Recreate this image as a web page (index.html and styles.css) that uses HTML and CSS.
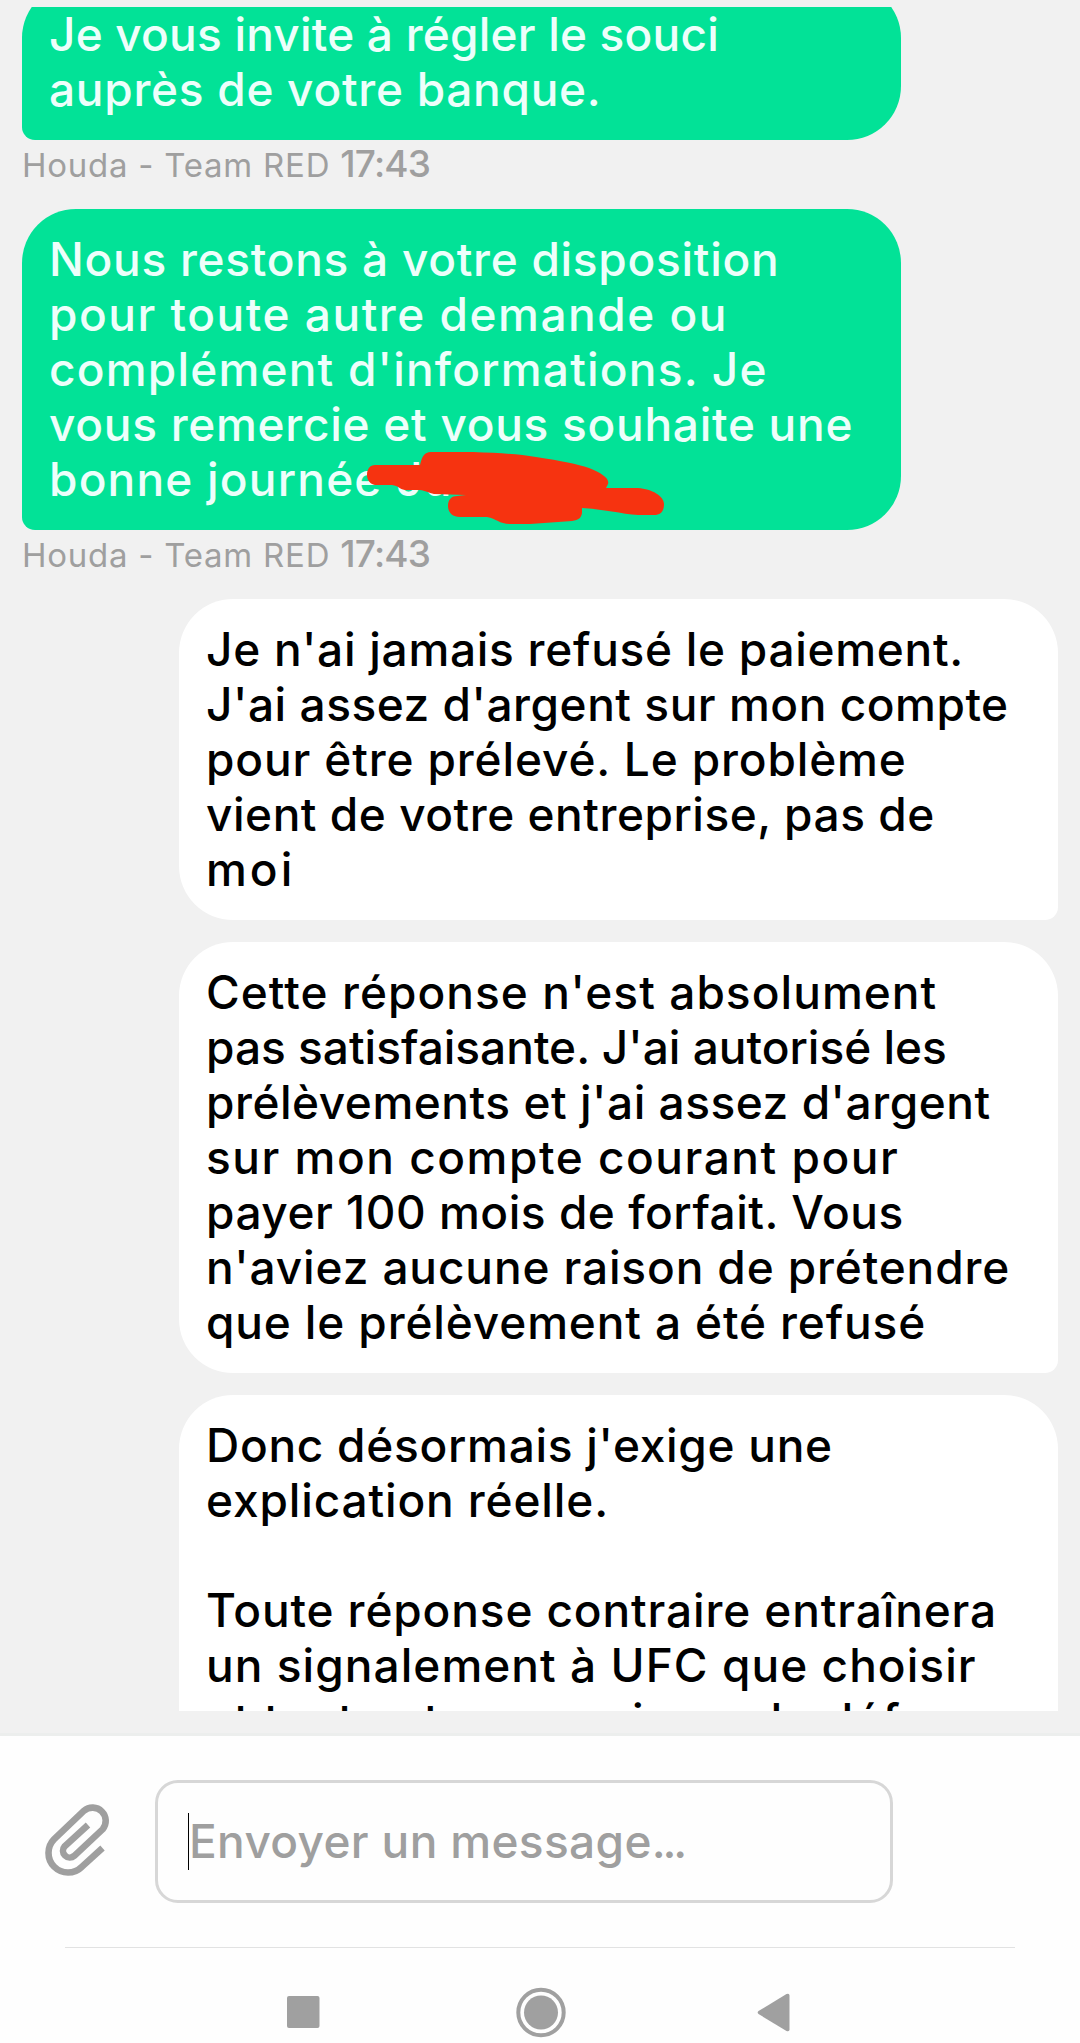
FILE: index.html
```html
<!DOCTYPE html>
<html lang="fr">
<head>
  <meta charset="UTF-8" />
  <title>Discussion - Team RED</title>
  <meta name="viewport" content="width=device-width, initial-scale=1" />
  <link rel="stylesheet" href="styles.css">
</head>
<body>

  <main class="chat">
    <div class="messages">
      <div class="bubble agent">
        <span class="ls-1">Je vous invite à régler le souci</span>
        <span class="ls-3">auprès de votre banque.</span>
      </div>
      <p class="meta">Houda - Team RED <time>17:43</time></p>

      <div class="bubble agent">
        <span class="ls-3">Nous restons à votre disposition</span>
        <span class="ls-7">pour toute autre demande ou</span>
        <span class="ls-6">complément d'informations. Je</span>
        <span class="ls-3">vous remercie et vous souhaite une</span>
        <span class="ls-6">bonne journée Ju</span>
        <svg class="scribble" viewBox="367 452 298 73">
          <path d="M375 465H420C422 457 424 452 431 452H473C500 453 518 454 536 457C562 461 577 464 589 468C602 473 610 479 608 484L606 488H638C652 489 664 496 664 504C664 511 661 515 654 515H638C622 514 603 509 582 508V513C581 518 579 520 572 521L530 524H511C499 524 497 519 487 517H460C452 517 448 512 448 506C448 499 452 496 457 496L466 495L434 494C426 492 424 490 418 490H405C399 489 399 486 392 485H375C370 484 367 480 367 475C367 469 370 465 375 465Z"/>
        </svg>
      </div>
      <p class="meta">Houda - Team RED <time>17:43</time></p>

      <div class="bubble client">
        <span class="ls-3">Je n'ai jamais refusé le paiement.</span>
        <span class="ls-2">J'ai assez d'argent sur mon compte</span>
        <span class="ls-4">pour être prélevé. Le problème</span>
        <span class="ls-2">vient de votre entreprise, pas de</span>
        <span class="ls-8">moi</span>
      </div>

      <div class="bubble client">
        <span class="ls-5">Cette réponse n'est absolument</span>
        <span>pas satisfaisante. J'ai autorisé les</span>
        <span class="ls-2">prélèvements et j'ai assez d'argent</span>
        <span class="ls-7">sur mon compte courant pour</span>
        <span class="ls-2">payer 100 mois de forfait. Vous</span>
        <span class="ls-4">n'aviez aucune raison de prétendre</span>
        <span class="ls-4">que le prélèvement a été refusé</span>
      </div>

      <div class="bubble client">
        <span class="ls-3">Donc désormais j'exige une</span>
        <span class="ls-4">explication réelle.</span>
        <br>
        <span class="ls-4">Toute réponse contraire entraînera</span>
        <span class="ls-5">un signalement à UFC que choisir</span>
        <span class="ls-5">et tout autre organisme de défense</span>
      </div>
    </div>
  </main>

  <footer>
    <div class="composer">
      <svg class="clip" viewBox="44 1803 68 73">
        <path d="M102.5 1848L81.8 1866.8A19.5 19.5 0 0 1 54.2 1839.2L84 1810.7A13.2 13.2 0 0 1 102.6 1829.3L74.3 1855.8A6.8 6.8 0 0 1 64.7 1846.2L88 1825"/>
      </svg>
      <div class="field"><span class="caret"></span>Envoyer un message<span class="dots">...</span></div>
    </div>
    <div class="navbar">
      <svg viewBox="0 0 60 60"><rect x="14" y="14" width="32.500" height="32" rx="2"/></svg>
      <svg viewBox="0 0 60 60"><circle class="ring" cx="32" cy="30.500" r="22.700"/><circle cx="32" cy="30.500" r="17"/></svg>
      <svg viewBox="0 0 60 60"><path d="M14.500 29Q12.800 30.500 14.500 32L42.500 49Q45.500 50 45.500 47.500V13.500Q45.500 11 42.500 12Z"/></svg>
    </div>
  </footer>

</body>
</html>
```
FILE: styles.css
```css
* {
  box-sizing: border-box;
}
body {
  margin: 0;
  height: 2043px;
  overflow: hidden;
  background: #fefefe;
  font-family: Inter, "Noto Sans", sans-serif;
  font-weight: 500;
  font-size: 46px;
  line-height: 55px;
}
.chat {
  height: 1736px;
  padding: 7px 22px 22px;
  background: #f1f1f1;
  border-bottom: 3px solid #eceeed;
}
.messages {
  height: 1704px;
  overflow: hidden;
  display: flex;
  flex-direction: column;
}
/* the list is scrolled down a little */
.messages::before {
  content: "";
  flex: none;
  margin-top: -23px;
}
.bubble {
  position: relative;
  flex: none;
  width: 879px;
  padding: 23px 27px;
  white-space: nowrap;
}
.bubble span {
  display: block;
}
.agent {
  background: #02e297;
  color: #edfffb;
  border-radius: 54px 54px 54px 13px;
}
.client {
  align-self: flex-end;
  margin-bottom: 22px;
  background: #fff;
  color: #000;
  border-radius: 54px 54px 13px 54px;
}
.ls-1 { letter-spacing: 0.2px; }
.ls-2 { letter-spacing: 0.53px; }
.ls-3 { letter-spacing: 0.72px; }
.ls-4 { letter-spacing: 0.87px; }
.ls-5 { letter-spacing: 1.05px; }
.ls-6 { letter-spacing: 1.2px; }
.ls-7 { letter-spacing: 1.52px; }
.ls-8 { letter-spacing: 3px; }
.meta {
  flex: none;
  height: 69px;
  margin: 0;
  padding-left: 0;
  font-size: 33px;
  font-weight: 400;
  line-height: 48px;
  letter-spacing: 0.75px;
  color: #9f9f9f;
}
.meta time {
  font-size: 37px;
  font-weight: 500;
  letter-spacing: -0.8px;
}
.scribble {
  position: absolute;
  left: 345px;
  top: 243px;
  width: 298px;
  height: 73px;
  fill: #f63310;
}
.composer {
  display: flex;
  align-items: center;
  height: 212px;
  margin: 0 65px;
  border-bottom: 1px solid #e2e2e2;
}
.clip {
  width: 68px;
  height: 73px;
  margin-left: -21px;
  margin-bottom: 4px;
  fill: none;
  stroke: #9f9f9f;
  stroke-width: 6.6;
}
.field {
  display: flex;
  align-items: center;
  width: 738px;
  height: 123px;
  margin-left: 43px;
  padding-left: 30px;
  border: 3px solid #d7d7d7;
  border-radius: 23px;
  letter-spacing: 0.35px;
  color: #9f9f9f;
}
.dots {
  letter-spacing: -3.2px;
}
.caret {
  width: 1px;
  height: 57px;
  background: #000;
}
.navbar {
  display: flex;
  justify-content: space-between;
  padding: 34px 276px 0 273px;
}
.navbar svg {
  width: 60px;
  height: 60px;
  fill: #a0a0a0;
}
.navbar .ring {
  fill: none;
  stroke: #a0a0a0;
  stroke-width: 4;
}
```
